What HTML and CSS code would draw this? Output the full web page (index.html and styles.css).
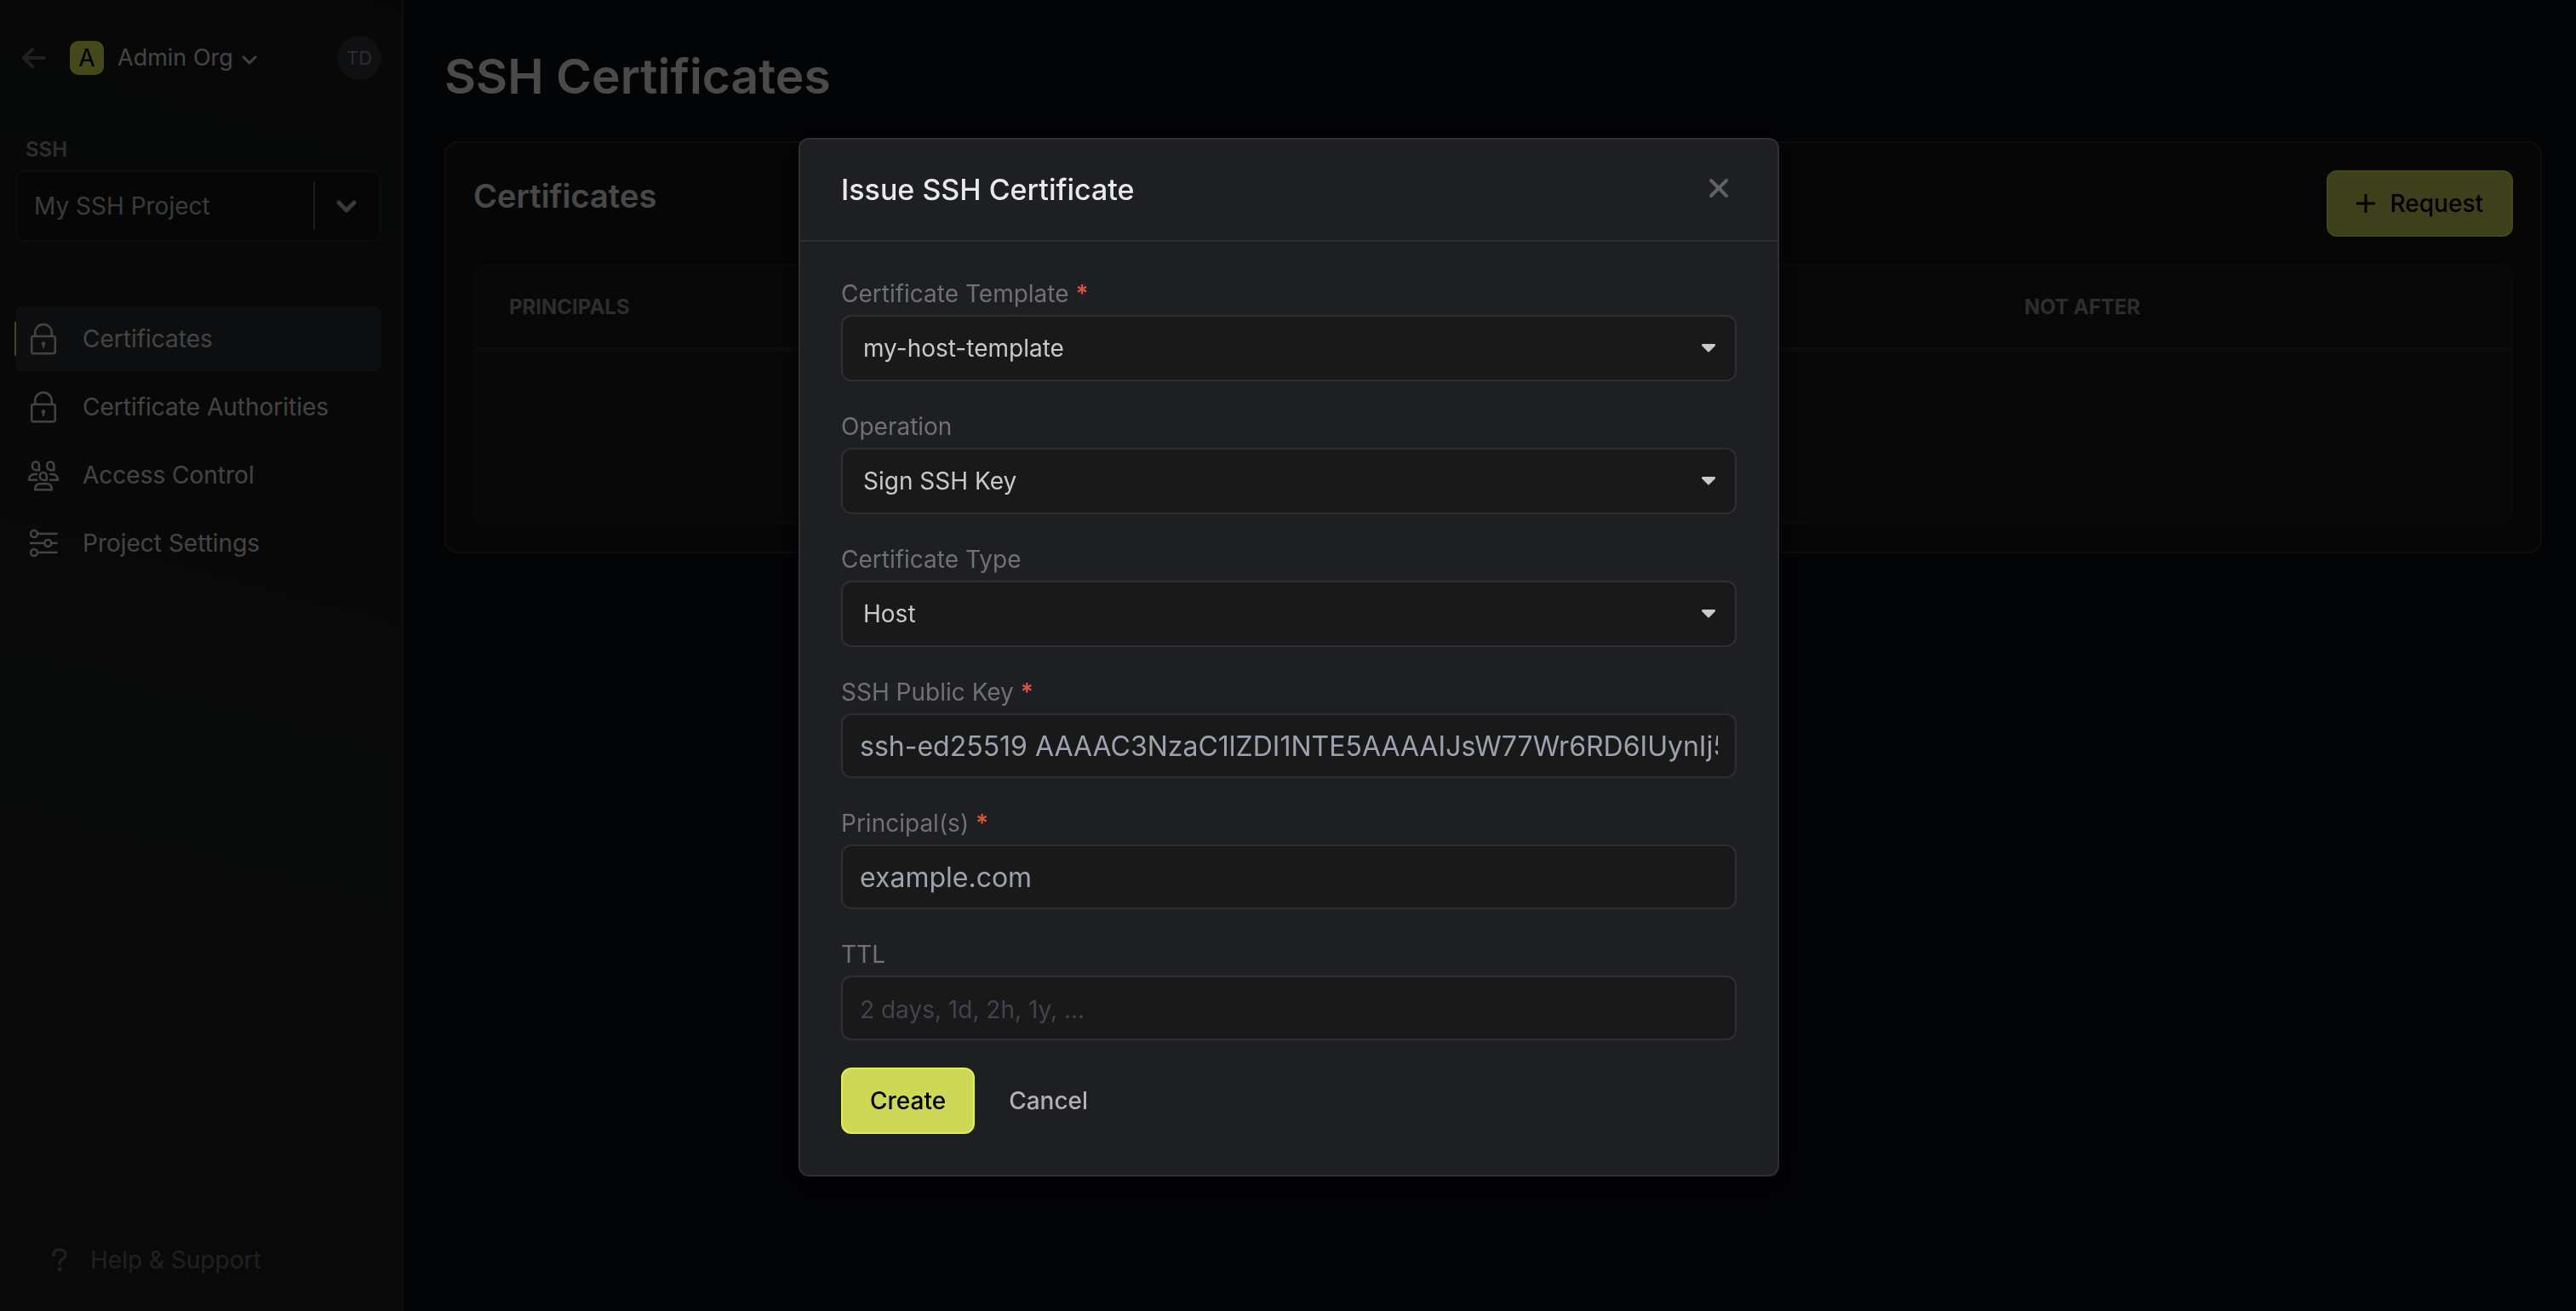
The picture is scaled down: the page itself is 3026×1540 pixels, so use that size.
FILE: index.html
```html
<!DOCTYPE html>
<html lang="en">
<head>
<meta charset="utf-8">
<meta name="viewport" content="width=device-width, initial-scale=1">
<title>SSH Certificates</title>
<link rel="stylesheet" href="styles.css">
</head>
<body>
<svg class="sprite" aria-hidden="true">
  <symbol id="lock" viewBox="0 0 40 40">
    <path d="M11.200 17V12.800a9.800 9.800 0 0 1 19.600 0V17" />
    <rect x="7.200" y="17" width="27.600" height="20.300" rx="2.500" />
    <circle class="solid" cx="21" cy="25.500" r="1" />
    <path d="M21 25.500v4" />
  </symbol>
  <symbol id="group" viewBox="0 0 40 40">
    <path d="M8 8.500a4 4 0 0 1 8 0v5.700h-3.500a4.500 4.500 0 0 1-4.500-4.500z" />
    <path d="M25.300 8.500a4 4 0 0 1 8 0v5.700h-3.500a4.500 4.500 0 0 1-4.500-4.500z" />
    <path d="M16.800 21a4 4 0 0 1 8 0v5h-3.500a4.500 4.500 0 0 1-4.500-4.500z" />
    <path d="M13 19h-2.500a6.500 6.500 0 0 0-6.500 6.800h9" />
    <path d="M29 19h2.500a6.500 6.500 0 0 1 6.500 6.800h-9" />
    <path d="M11.200 37.300q0-7 6-7h7.600q6 0 6 7z" />
  </symbol>
  <symbol id="sliders" viewBox="0 0 40 40">
    <circle cx="10" cy="9" r="4" /><path d="M14 9h22.500" />
    <circle cx="26.300" cy="20" r="4" /><path d="M6 20h16M30.300 20h6.200" />
    <circle cx="10" cy="31" r="4" /><path d="M14 31h22.500" />
  </symbol>
</svg>

<div class="app">
  <aside class="sidebar">
    <header class="org">
      <a class="back" href="#" aria-label="Back">
        <svg width="28" height="28" viewBox="0 0 28 28"><path d="M12 4 2 14l10 10M2 14h24" /></svg>
      </a>
      <span class="org-logo">A</span>
      <button class="org-name" type="button">Admin Org
        <svg width="18" height="12" viewBox="0 0 18 12"><path d="m2 3 7 7 7-7" /></svg>
      </button>
      <button class="avatar" type="button">TD</button>
    </header>

    <div class="project">
      <label class="project-label" for="project">SSH</label>
      <div class="picker project-picker">
        <select id="project"><option>My SSH Project</option></select>
        <span class="project-arrow">
          <svg width="26" height="18" viewBox="0 0 26 18"><path d="m4 5 9 9 9-9" /></svg>
        </span>
      </div>
    </div>

    <nav class="menu">
      <a class="menu-item active" href="#"><svg class="icon"><use href="#lock" /></svg>Certificates</a>
      <a class="menu-item" href="#"><svg class="icon"><use href="#lock" /></svg>Certificate Authorities</a>
      <a class="menu-item" href="#"><svg class="icon"><use href="#group" /></svg>Access Control</a>
      <a class="menu-item" href="#"><svg class="icon"><use href="#sliders" /></svg>Project Settings</a>
    </nav>

    <a class="help" href="#">
      <svg width="18" height="28" viewBox="0 0 18 28"><path d="M2 9V8q0-6 7-6t7 6q0 3-4 5t-3 6" /><circle class="solid" cx="9" cy="25" r="1" /></svg>
      Help &amp; Support
    </a>
  </aside>

  <main class="content">
    <h1>SSH Certificates</h1>
    <section class="card">
      <div class="card-head">
        <h2>Certificates</h2>
        <button class="btn primary request" type="button">
          <svg width="22" height="22" viewBox="0 0 22 22"><path d="M11 1v20M1 11h20" /></svg>
          Request
        </button>
      </div>
      <div class="table-frame">
        <table>
          <thead><tr><th>Principals</th><th class="expiry">Not After</th></tr></thead>
          <tbody><tr><td colspan="2"></td></tr></tbody>
        </table>
      </div>
    </section>
  </main>
</div>

<div class="overlay">
  <div class="modal" role="dialog" aria-modal="true" aria-labelledby="modal-title">
    <header class="modal-head">
      <h2 id="modal-title">Issue SSH Certificate</h2>
      <button class="close" type="button" aria-label="Close">
        <svg width="24" height="24" viewBox="0 0 24 24"><path d="m3 3 18 18M21 3 3 21" /></svg>
      </button>
    </header>
    <form class="modal-body">
      <div class="field">
        <label for="template">Certificate Template <span class="required">*</span></label>
        <div class="picker">
          <select id="template"><option>my-host-template</option></select>
          <svg class="caret" width="16" height="10" viewBox="0 0 16 10"><path d="M1 0h14q2 1 .5 2.500L9 9q-1 1-2 0L.5 2.500Q-1 1 1 0z" /></svg>
        </div>
      </div>
      <div class="field">
        <label for="operation">Operation</label>
        <div class="picker">
          <select id="operation"><option>Sign SSH Key</option></select>
          <svg class="caret" width="16" height="10" viewBox="0 0 16 10"><path d="M1 0h14q2 1 .5 2.500L9 9q-1 1-2 0L.5 2.500Q-1 1 1 0z" /></svg>
        </div>
      </div>
      <div class="field">
        <label for="type">Certificate Type</label>
        <div class="picker">
          <select id="type"><option>Host</option></select>
          <svg class="caret" width="16" height="10" viewBox="0 0 16 10"><path d="M1 0h14q2 1 .5 2.500L9 9q-1 1-2 0L.5 2.500Q-1 1 1 0z" /></svg>
        </div>
      </div>
      <div class="field">
        <label for="key">SSH Public Key <span class="required">*</span></label>
        <input id="key" type="text" value="ssh-ed25519 AAAAC3NzaC1lZDI1NTE5AAAAIJsW77Wr6RD6IUynIj5">
      </div>
      <div class="field">
        <label for="principals">Principal(s) <span class="required">*</span></label>
        <input id="principals" type="text" value="example.com">
      </div>
      <div class="field">
        <label for="ttl">TTL</label>
        <input id="ttl" type="text" placeholder="2 days, 1d, 2h, 1y, ...">
      </div>
      <div class="actions">
        <button class="btn primary" type="button">Create</button>
        <button class="btn plain" type="button">Cancel</button>
      </div>
    </form>
  </div>
</div>
</body>
</html>
```

FILE: styles.css
```css
*, *::before, *::after { box-sizing: border-box; }

body {
  margin: 0;
  background: #0c0e14;
  color: #e2e2e2;
  font: 28px/40px Inter, "Liberation Sans", sans-serif;
}

h1, h2 { margin: 0; }
a { color: inherit; text-decoration: none; }

button, input, select {
  margin: 0;
  padding: 0;
  border: 0;
  background: none;
  color: inherit;
  font: inherit;
}

svg {
  flex: none;
  fill: none;
  stroke: currentColor;
  stroke-width: 2;
  stroke-linecap: round;
  stroke-linejoin: round;
}

.solid { fill: currentColor; }
.sprite { display: none; }

.app {
  display: grid;
  grid-template-columns: 474px 1fr;
  min-height: 100vh;
}

/* Sidebar */
.sidebar {
  display: flex;
  flex-direction: column;
  padding: 42px 24px 40px 18px;
  border-right: 2px solid #33353a;
  background: linear-gradient(195deg, #1a1a1b 0%, #1c1e1d 45%, #212124 100%);
}

.org {
  display: flex;
  align-items: center;
  height: 52px;
  padding-left: 8px;
}

.back { display: flex; color: #6b6d70; }
.back svg { stroke-width: 4; }

.org-logo {
  display: grid;
  place-items: center;
  width: 40px;
  height: 40px;
  margin: 0 16px 0 28px;
  border-radius: 10px;
  background: #e8f05c;
  color: #000;
}

.org-name {
  display: flex;
  align-items: center;
  gap: 10px;
  font-size: 27px;
}

.org-name svg {
  margin-top: 4px;
  stroke-width: 3;
}

.avatar {
  width: 52px;
  height: 52px;
  margin-left: auto;
  border-radius: 50%;
  background: #34363c;
  color: #939599;
  font-size: 22px;
}

.project { margin-top: 62px; }

.project-label {
  display: block;
  height: 44px;
  padding-left: 12px;
  color: #94969e;
  font-size: 24px;
  font-weight: 600;
}

.picker {
  display: grid;
  align-items: center;
}

.picker > * { grid-area: 1 / 1; }

.picker select {
  appearance: none;
  width: 100%;
  height: 78px;
  padding: 0 80px 0 24px;
  border: 2px solid #2d2f33;
  border-radius: 12px;
  background: #19191a;
  color: #c8c9cc;
}

.picker.project-picker select {
  height: 84px;
  padding-left: 20px;
  border-color: #2a2c2f;
  background: #161616;
  color: #c4c4c4;
}

.project-arrow {
  display: grid;
  place-items: center;
  justify-self: end;
  width: 80px;
  height: 56px;
  padding-right: 4px;
  border-left: 2px solid #66686c;
  color: #c4c4c4;
  pointer-events: none;
}

.project-arrow svg { stroke-width: 5; }

.menu {
  display: grid;
  gap: 4px;
  margin-top: 76px;
}

.menu-item {
  display: flex;
  align-items: center;
  gap: 27px;
  height: 76px;
  padding-left: 12px;
  border-radius: 8px;
}

.menu-item.active {
  position: relative;
  background: #2b2f33;
}

.menu-item.active::before {
  position: absolute;
  top: 18px;
  left: -1px;
  width: 2px;
  height: 40px;
  background: #e0ed55;
  content: "";
}

.icon {
  width: 40px;
  height: 40px;
  stroke-width: 2.5;
}

.help {
  display: flex;
  align-items: center;
  gap: 27px;
  margin-top: auto;
  padding-left: 43px;
  color: #6b6d70;
}

.help svg { stroke-width: 3; }

/* Page */
.content { padding: 50px 40px 48px 48px; }

h1 {
  margin-bottom: 36px;
  color: #f8f8f8;
  font-size: 57px;
  font-weight: 600;
  line-height: 80px;
}

.card {
  padding: 32px;
  border: 2px solid #2d2f33;
  border-radius: 16px;
  background: #151515;
}

.card-head {
  display: flex;
  align-items: flex-start;
  justify-content: space-between;
  margin-bottom: 32px;
}

.card-head h2 {
  color: #f0f0f0;
  font-size: 38px;
  font-weight: 600;
  line-height: 60px;
}

.btn {
  height: 78px;
  border-radius: 12px;
  font-weight: 500;
}

.btn.primary {
  padding: 0 32px;
  border: 2px solid #e0ed55;
  background: #cdd857;
  color: #000;
}

.btn.plain { color: #b1b1b1; }

.btn.request {
  display: flex;
  align-items: center;
  gap: 18px;
  padding: 0 33px;
}

.request svg { stroke-width: 3; }

.table-frame {
  overflow: hidden;
  border: 2px solid #232427;
  border-radius: 16px;
  background: #1b1b1b;
}

table {
  width: 100%;
  border-spacing: 0;
  table-layout: fixed;
}

th {
  height: 100px;
  padding: 2px 40px 0;
  border-bottom: 4px solid #2a2b2d;
  color: #949696;
  font-size: 24px;
  font-weight: 700;
  text-align: left;
  text-transform: uppercase;
}

.expiry { width: 612px; }
td { height: 202px; padding: 0; }

/* Dialog */
.overlay {
  position: fixed;
  inset: 0;
  display: grid;
  place-items: center;
  padding: 4px 0 0 2px;
  overflow: auto;
  background: rgb(0 0 0 / 70%);
}

.modal {
  width: 100%;
  max-width: 1152px;
  border: 2px solid #2d2f33;
  border-radius: 12px;
  background: #1e1f23;
  box-shadow: 0 8px 32px rgb(0 0 0 / 50%);
}

.modal-head {
  display: flex;
  align-items: center;
  justify-content: space-between;
  height: 120px;
  padding: 0 57px 0 48px;
  border-bottom: 2px solid #2d2f33;
}

.modal-head h2 {
  color: #e8e9ee;
  font-size: 34px;
  font-weight: 500;
}

.close {
  display: flex;
  padding-bottom: 4px;
  color: #606165;
}

.close svg { stroke-width: 4; }

.modal-body {
  display: grid;
  gap: 40px;
  padding: 48px;
}

.field { display: grid; gap: 12px; }

.field label {
  color: #707175;
  line-height: 26px;
}

.required {
  color: #d9553f;
  font-weight: 600;
}

.caret {
  justify-self: end;
  margin-right: 25px;
  fill: #c8c9cc;
  stroke: none;
  pointer-events: none;
}

.field input {
  width: 100%;
  height: 76px;
  padding: 0 20px;
  border: 2px solid #2d2f33;
  border-radius: 12px;
  background: #19191a;
  color: #9ca3af;
  font-size: 32px;
}

.field input::placeholder {
  color: #41434f;
  font-size: 28px;
  opacity: 1;
}

.actions {
  display: flex;
  gap: 40px;
  margin-top: -8px;
}
```
